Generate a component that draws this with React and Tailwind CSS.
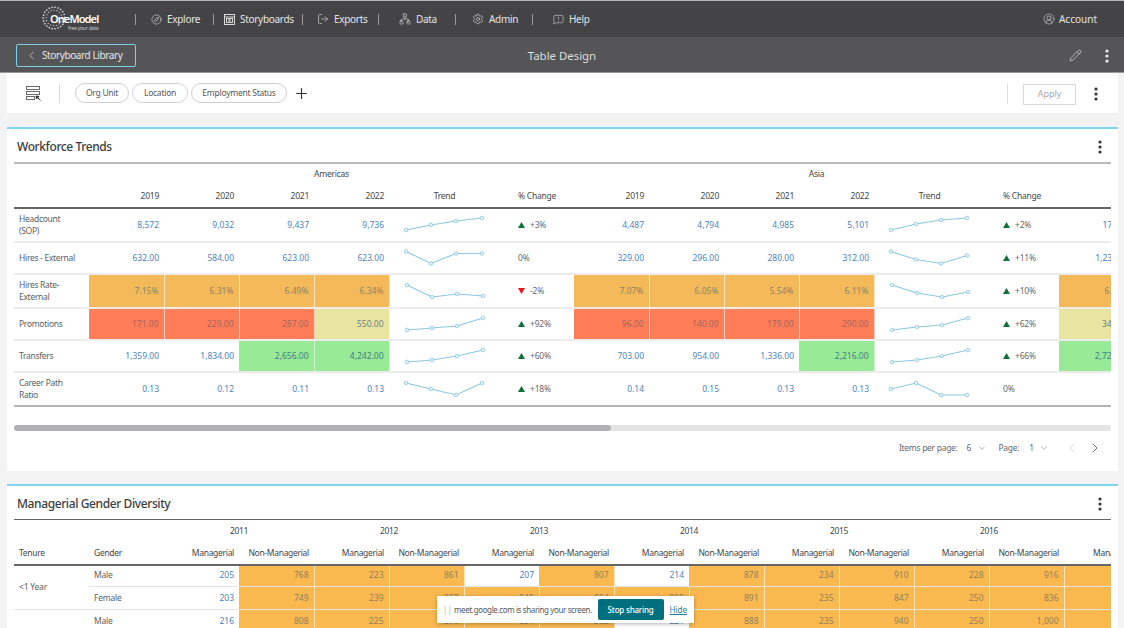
import React from 'react';
import {
  ChevronLeft,
  ChevronRight,
  ChevronDown,
  Pencil,
  Plus,
  Compass,
  LogOut,
  Network,
  Settings,
  MessageSquareWarning,
  CircleUserRound,
} from 'lucide-react';

const fontStack = { fontFamily: '"Noto Sans", sans-serif' };

const blue = 'text-[#4d84bb]';
const heatClass = {
  o: 'bg-[#f4b958] text-[#8d8468] border-r border-r-[#fbe6c4]',
  O: 'bg-[#fab94f] text-[#90805f] border-r border-r-[#fde3b8]',
  r: 'bg-[#ff7e58] text-[#a2645f] border-r border-r-[#ffd0c0]',
  y: 'bg-[#e8e5a1] text-[#6f8280] border-r border-r-[#f4f2d0]',
  g: 'bg-[#98ea96] text-[#3f7e86] border-r border-r-[#cdf5cc]',
};

const trendRows = [
  {
    label: ['Headcount', '(SOP)'],
    h: 'h-[34px]',
    off: 2,
    blocks: [
      { vals: ['8,572', '9,032', '9,437', '9,736'], heat: '', line: [22, 17, 13, 10], up: 1, pct: '+3%' },
      { vals: ['4,487', '4,794', '4,985', '5,101'], heat: '', line: [22, 16, 12, 10], up: 1, pct: '+2%' },
    ],
    extra: ['17,304', ''],
  },
  {
    label: ['Hires - External'],
    h: 'h-[31px]',
    off: 0.5,
    blocks: [
      { vals: ['632.00', '584.00', '623.00', '623.00'], heat: '', line: [9, 21, 11, 11], up: 0, pct: '0%' },
      { vals: ['329.00', '296.00', '280.00', '312.00'], heat: '', line: [9, 17, 21, 13], up: 1, pct: '+11%' },
    ],
    extra: ['1,234.00', ''],
  },
  {
    label: ['Hires Rate-', 'External'],
    h: 'h-[34px]',
    off: 2,
    blocks: [
      { vals: ['7.15%', '6.31%', '6.49%', '6.34%'], heat: 'oooo', line: [11, 23, 20, 22], up: -1, pct: '-2%' },
      { vals: ['7.07%', '6.05%', '5.54%', '6.11%'], heat: 'oooo', line: [11, 19, 23, 18], up: 1, pct: '+10%' },
    ],
    extra: ['6.52%', 'o'],
  },
  {
    label: ['Promotions'],
    h: 'h-[32px]',
    off: 1,
    blocks: [
      { vals: ['171.00', '229.00', '287.00', '550.00'], heat: 'rrry', line: [22, 20, 18, 10], up: 1, pct: '+92%' },
      { vals: ['96.00', '140.00', '179.00', '290.00'], heat: 'rrrr', line: [22, 19, 17, 10], up: 1, pct: '+62%' },
    ],
    extra: ['345.00', 'y'],
  },
  {
    label: ['Transfers'],
    h: 'h-[32px]',
    off: 1,
    blocks: [
      { vals: ['1,359.00', '1,834.00', '2,656.00', '4,242.00'], heat: '--gg', line: [22, 20, 16, 10], up: 1, pct: '+60%' },
      { vals: ['703.00', '954.00', '1,336.00', '2,216.00'], heat: '---g', line: [22, 20, 16, 10], up: 1, pct: '+66%' },
    ],
    extra: ['2,722.00', 'g'],
  },
  {
    label: ['Career Path', 'Ratio'],
    h: 'h-[34px]',
    off: 2,
    blocks: [
      { vals: ['0.13', '0.12', '0.11', '0.13'], heat: '', line: [11, 17, 23, 11], up: 1, pct: '+18%' },
      { vals: ['0.14', '0.15', '0.13', '0.13'], heat: '', line: [17, 11, 23, 23], up: 0, pct: '0%' },
    ],
    extra: ['0.12', ''],
  },
];

const diversityRows = [
  {
    gender: 'Male',
    h: 'h-[22px]',
    border: 'border-b border-b-[#e4e4e4]',
    vals: ['205', '768', '223', '861', '207', '807', '214', '878', '234', '910', '228', '916'],
    heat: '-OOO-O-OOOOO',
  },
  {
    gender: 'Female',
    h: 'h-[23px]',
    border: 'border-b border-b-[#e4e4e4]',
    vals: ['203', '749', '239', '867', '849', '864', '868', '891', '235', '847', '250', '836'],
    heat: '-OOOOOOOOOOO',
  },
  {
    gender: 'Male',
    h: 'h-[23px]',
    border: '',
    vals: ['216', '808', '225', '870', '851', '862', '221', '888', '235', '940', '250', '1,000'],
    heat: '-OOOOO-OOOOO',
  },
];

const Spark = ({ points, off }) => {
  const xs = [17, 42, 67, 93];
  const ys = points.map((y) => y - off);
  const d = ys.map((y, i) => `${xs[i]},${y}`).join(' ');
  return (
    <svg width="111" height="30" viewBox="0 0 111 30" className="block overflow-visible">
      <polyline points={d} fill="none" stroke="#8cc8de" strokeWidth="1.1" />
      {ys.map((y, i) => (
        <circle key={i} cx={xs[i]} cy={y} r="1.8" fill="#e4f3f9" stroke="#8cc8de" strokeWidth="0.8" />
      ))}
    </svg>
  );
};

const Change = ({ up, pct }) => (
  <div className="flex items-center pl-[18px] text-[#66686b] tracking-[-0.2px]">
    {up !== 0 && (
      <svg width="7" height="6" viewBox="0 0 7 6" className="mr-[5px]">
        {up > 0 ? <polygon points="3.5,0 7,6 0,6" fill="#12703a" /> : <polygon points="0,0 7,0 3.5,6" fill="#e8141c" />}
      </svg>
    )}
    <span>{pct}</span>
  </div>
);

const Dots = ({ color }) => (
  <svg width="4" height="14" viewBox="0 0 4 14" className="block">
    <circle cx="2" cy="2" r="1.6" fill={color} />
    <circle cx="2" cy="7" r="1.6" fill={color} />
    <circle cx="2" cy="12" r="1.6" fill={color} />
  </svg>
);

const Logo = () => (
  <div className="relative w-[58px] h-[26px] shrink-0">
    <svg width="24" height="24" viewBox="0 0 24 24" className="absolute left-0 top-0">
      <circle cx="12" cy="12" r="10.8" fill="none" stroke="#e5e5e5" strokeWidth="1.4" strokeDasharray="1.4 1.6" />
      <circle cx="12" cy="12" r="7.8" fill="none" stroke="#cfcfcf" strokeWidth="1.1" strokeDasharray="1.2 1.8" />
    </svg>
    <span className="absolute left-[8px] top-[6px] text-[11px] leading-[14px] font-semibold tracking-[-0.9px] text-white">OneModel</span>
    <span className="absolute left-[26px] top-[19px] text-[5px] leading-[6px] tracking-[-0.2px] text-[#c8c8c8]">free your data</span>
  </div>
);

const StoryIcon = () => (
  <svg width="11" height="11" viewBox="0 0 11 11" fill="none" stroke="#d8d8d8" strokeWidth="1">
    <rect x="0.5" y="0.5" width="10" height="10" />
    <line x1="0.5" y1="3" x2="10.5" y2="3" />
    <rect x="2.5" y="4.5" width="2.5" height="4" />
    <rect x="6" y="4.5" width="2.5" height="4" />
  </svg>
);

const FilterIcon = () => (
  <svg width="15" height="15" viewBox="0 0 15 15" fill="none" stroke="#6b6b6b" strokeWidth="1">
    <rect x="0.5" y="0.5" width="13" height="3" />
    <rect x="0.5" y="5.5" width="13" height="3" />
    <rect x="0.5" y="10.5" width="8" height="3" />
    <path d="M10 10 L14.5 14.5 M10 10 L13 10.5 L10.5 13 Z" stroke="#333" fill="#333" />
  </svg>
);

const NavItem = ({ icon, label, cls }) => (
  <div className={`flex items-center gap-[5px] border-l border-l-[#9a9a9a] h-[11px] ${cls}`}>
    {icon}
    <span className="tracking-[-0.3px]">{label}</span>
  </div>
);

const TopNav = () => (
  <div className="h-[37px] bg-[#444446] border-t border-t-[#b5b5b5] flex items-center pl-[42px] pr-[27px] text-[10px] text-[#e4e4e4]">
    <div className="w-[93px]">
      <Logo />
    </div>
    <NavItem cls="w-[78px] pl-[15px]" label="Explore" icon={<Compass size={11} strokeWidth={1.3} />} />
    <NavItem cls="w-[89px] pl-[10px]" label="Storyboards" icon={<StoryIcon />} />
    <NavItem cls="w-[76px] pl-[14px]" label="Exports" icon={<LogOut size={12} strokeWidth={1.2} />} />
    <NavItem cls="w-[77px] pl-[20px]" label="Data" icon={<Network size={12} strokeWidth={1.2} />} />
    <NavItem cls="w-[77px] pl-[16px]" label="Admin" icon={<Settings size={12} strokeWidth={1.2} />} />
    <NavItem cls="w-[77px] pl-[20px]" label="Help" icon={<MessageSquareWarning size={11} strokeWidth={1.2} />} />
    <div className="ml-auto flex items-center gap-[4px]">
      <CircleUserRound size={12} strokeWidth={1.1} />
      <span>Account</span>
    </div>
  </div>
);

const TitleBar = () => (
  <div className="h-[36px] bg-[#555456] border-b border-b-[#9b9b9b] flex items-center justify-between pt-[2px] pl-[16px] pr-[15px] relative">
    <div className="w-[120px] h-[23px] border border-[#7fd0e6] rounded-[2px] flex items-center pl-[8px] gap-[4px] text-[10px] text-[#e8e8e8]">
      <ChevronLeft size={13} strokeWidth={1.2} />
      <span className="tracking-[-0.4px]">Storyboard Library</span>
    </div>
    <div className="absolute left-0 right-0 text-center text-[11.5px] tracking-[-0.05px] text-[#dedede]">Table Design</div>
    <div className="flex items-center gap-[23px]">
      <Pencil size={13} strokeWidth={1.2} color="#e4e4e4" />
      <Dots color="#ececec" />
    </div>
  </div>
);

const Chip = ({ label, cls }) => (
  <div className={`h-[20px] border border-[#cfcfcf] rounded-full flex items-center justify-center text-[8.5px] tracking-[-0.25px] text-[#55585c] ${cls}`}>{label}</div>
);

const FilterBar = () => (
  <div className="mx-[7px] mr-[6px] h-[40px] bg-white flex items-center pl-[19px] pr-[20px]">
    <FilterIcon />
    <div className="w-px h-[19px] bg-[#d9d9d9] ml-[18px] mr-[15px]" />
    <div className="flex items-center gap-[3px]">
      <Chip label="Org Unit" cls="w-[54px]" />
      <Chip label="Location" cls="w-[56px]" />
      <Chip label="Employment Status" cls="w-[96px]" />
    </div>
    <Plus size={17} strokeWidth={1.6} color="#333" className="ml-[6px]" />
    <div className="ml-auto flex items-center mt-[2px]">
      <div className="w-px h-[20px] bg-[#dedede] mr-[15px]" />
      <div className="w-[53px] h-[21px] border border-[#d8d8d8] flex items-center justify-center text-[9px] text-[#a9a9a9]">Apply</div>
      <div className="ml-[18px]">
        <Dots color="#333" />
      </div>
    </div>
  </div>
);

const CardTitle = ({ text, h }) => (
  <div className={`flex items-center justify-between pt-[3px] pl-[10px] pr-[16px] ${h}`}>
    <h2 className="text-[12px] font-medium tracking-[-0.4px] text-[#3b3d40]">{text}</h2>
    <Dots color="#333" />
  </div>
);

const NumCell = ({ val, kind, extraCls }) => (
  <td className={`text-right pr-[5px] ${kind && heatClass[kind] ? heatClass[kind] : blue} ${extraCls || ''}`}>{val}</td>
);

const WorkforceTrends = () => (
  <div className="mx-[7px] mr-[6px] mt-[14px] bg-white border-t-2 border-t-[#7dd5f3]">
    <CardTitle text="Workforce Trends" h="h-[33px]" />
    <div className="mx-[7px] overflow-hidden">
      <table className="table-fixed border-collapse w-[1120px] text-[8.5px] border-t-2 border-t-[#b9b9b9]">
        <colgroup>
          <col className="w-[75px]" />
          {[0, 1].map((b) => (
            <React.Fragment key={b}>
              <col className="w-[75px]" />
              <col className="w-[75px]" />
              <col className="w-[75px]" />
              <col className="w-[75px]" />
              <col className="w-[111px]" />
              <col className="w-[74px]" />
            </React.Fragment>
          ))}
          <col className="w-[75px]" />
        </colgroup>
        <thead className="text-[#44474a] font-normal tracking-[-0.25px]">
          <tr className="h-[22px]">
            <th />
            <th colSpan={6} className="font-normal text-center">Americas</th>
            <th colSpan={6} className="font-normal text-center">Asia</th>
            <th />
          </tr>
          <tr className="h-[23px] border-b-2 border-b-[#666]">
            <th />
            {[0, 1].map((b) => (
              <React.Fragment key={b}>
                {['2019', '2020', '2021', '2022'].map((y) => (
                  <th key={y} className="font-normal text-right pr-[5px]">{y}</th>
                ))}
                <th className="font-normal text-center">Trend</th>
                <th className="font-normal text-left pl-[18px]">% Change</th>
              </React.Fragment>
            ))}
            <th />
          </tr>
        </thead>
        <tbody>
          {trendRows.map((row, r) => (
            <tr key={r} className={`${row.h} ${r === trendRows.length - 1 ? 'border-b-2 border-b-[#b4b4b4]' : 'border-b-2 border-b-[#ececec]'}`}>
              <td className="pl-[5px] leading-[12px] tracking-[-0.3px] text-[#5c5f62]">
                {row.label.map((l) => (
                  <div key={l}>{l}</div>
                ))}
              </td>
              {row.blocks.map((b, i) => (
                <React.Fragment key={i}>
                  {b.vals.map((v, j) => (
                    <NumCell key={j} val={v} kind={b.heat[j]} />
                  ))}
                  <td className="p-0">
                    <Spark points={b.line} off={row.off} />
                  </td>
                  <td className="p-0">
                    <Change up={b.up} pct={b.pct} />
                  </td>
                </React.Fragment>
              ))}
              <NumCell val={row.extra[0]} kind={row.extra[1]} />
            </tr>
          ))}
        </tbody>
      </table>
    </div>
    <div className="mx-[7px] mt-[18px] h-[6px] rounded-full bg-[#e4e4e4]">
      <div className="w-[597px] h-[6px] rounded-full bg-[#b2b2b4]" />
    </div>
    <div className="h-[40px] pb-[6px] flex items-center justify-end pr-[15px] text-[8.5px] text-[#66686b]">
      <span className="tracking-[-0.3px]">Items per page:</span>
      <span className="ml-[9px]">6</span>
      <ChevronDown size={10} strokeWidth={1.2} className="ml-[6px]" />
      <span className="ml-[11px] tracking-[-0.3px]">Page:</span>
      <span className="ml-[10px]">1</span>
      <ChevronDown size={10} strokeWidth={1.2} className="ml-[5px]" />
      <ChevronLeft size={16} strokeWidth={1} color="#c8c8c8" className="ml-[15px]" />
      <ChevronRight size={16} strokeWidth={1.2} color="#444" className="ml-[7px]" />
    </div>
  </div>
);

const years = ['2011', '2012', '2013', '2014', '2015', '2016'];

const GenderDiversity = () => (
  <div className="mx-[7px] mr-[6px] mt-[13px] bg-white border-t-2 border-t-[#7dd5f3]">
    <CardTitle text="Managerial Gender Diversity" h="h-[33px]" />
    <div className="mx-[7px] overflow-hidden">
      <table className="table-fixed border-collapse w-[1125px] text-[8.5px] border-t border-t-[#666]">
        <colgroup>
          {Array.from({ length: 15 }).map((_, i) => (
            <col key={i} className="w-[75px]" />
          ))}
        </colgroup>
        <thead className="text-[#44474a] tracking-[-0.3px]">
          <tr className="h-[23px]">
            <th />
            <th />
            {years.map((y) => (
              <th key={y} colSpan={2} className="font-normal text-center">{y}</th>
            ))}
            <th />
          </tr>
          <tr className="h-[22px] border-b-2 border-b-[#666]">
            <th className="font-normal text-left pl-[5px]">Tenure</th>
            <th className="font-normal text-left pl-[5px]">Gender</th>
            {years.map((y) => (
              <React.Fragment key={y}>
                <th className="font-normal text-right pr-[5px]">Managerial</th>
                <th className="font-normal text-right pr-[5px]">Non-Managerial</th>
              </React.Fragment>
            ))}
            <th className="font-normal text-left pl-[29px]">Managerial</th>
          </tr>
        </thead>
        <tbody>
          {diversityRows.map((row, r) => (
            <tr key={r} className={`${row.h} ${row.border}`}>
              {r === 0 && (
                <td rowSpan={2} className="pl-[5px] tracking-[-0.2px] text-[#5c5f62] border-b border-b-[#e4e4e4]">&lt;1 Year</td>
              )}
              {r === 2 && <td />}
              <td className="pl-[5px] tracking-[-0.2px] text-[#5c5f62]">{row.gender}</td>
              {row.vals.map((v, j) => (
                <NumCell key={j} val={v} kind={row.heat[j]} />
              ))}
              <NumCell val="" kind="O" />
            </tr>
          ))}
        </tbody>
      </table>
    </div>
  </div>
);

const SharingBar = () => (
  <div className="absolute left-[437px] top-[596px] w-[257px] h-[27px] bg-white shadow-[0_1px_4px_rgba(0,0,0,0.3)] flex items-center pl-[6px] pr-[7px] text-[8px] text-[#55585c]">
    <span className="text-[#b5b5b5] w-[11px] shrink-0">||</span>
    <span className="whitespace-nowrap tracking-[-0.38px]">meet.google.com is sharing your screen.</span>
    <div className="ml-auto flex items-center">
      <div className="w-[66px] h-[21px] bg-[#00707f] rounded-[2px] flex items-center justify-center text-white font-medium tracking-[-0.2px]">Stop sharing</div>
      <span className="ml-[6px] text-[#1a7f9c] underline">Hide</span>
    </div>
  </div>
);

const App = () => {
  return (
    <div className="relative w-[1124px] h-[628px] overflow-hidden bg-[#f3f3f3]" style={fontStack}>
      <TopNav />
      <TitleBar />
      <FilterBar />
      <WorkforceTrends />
      <GenderDiversity />
      <SharingBar />
    </div>
  );
};

export default App;
